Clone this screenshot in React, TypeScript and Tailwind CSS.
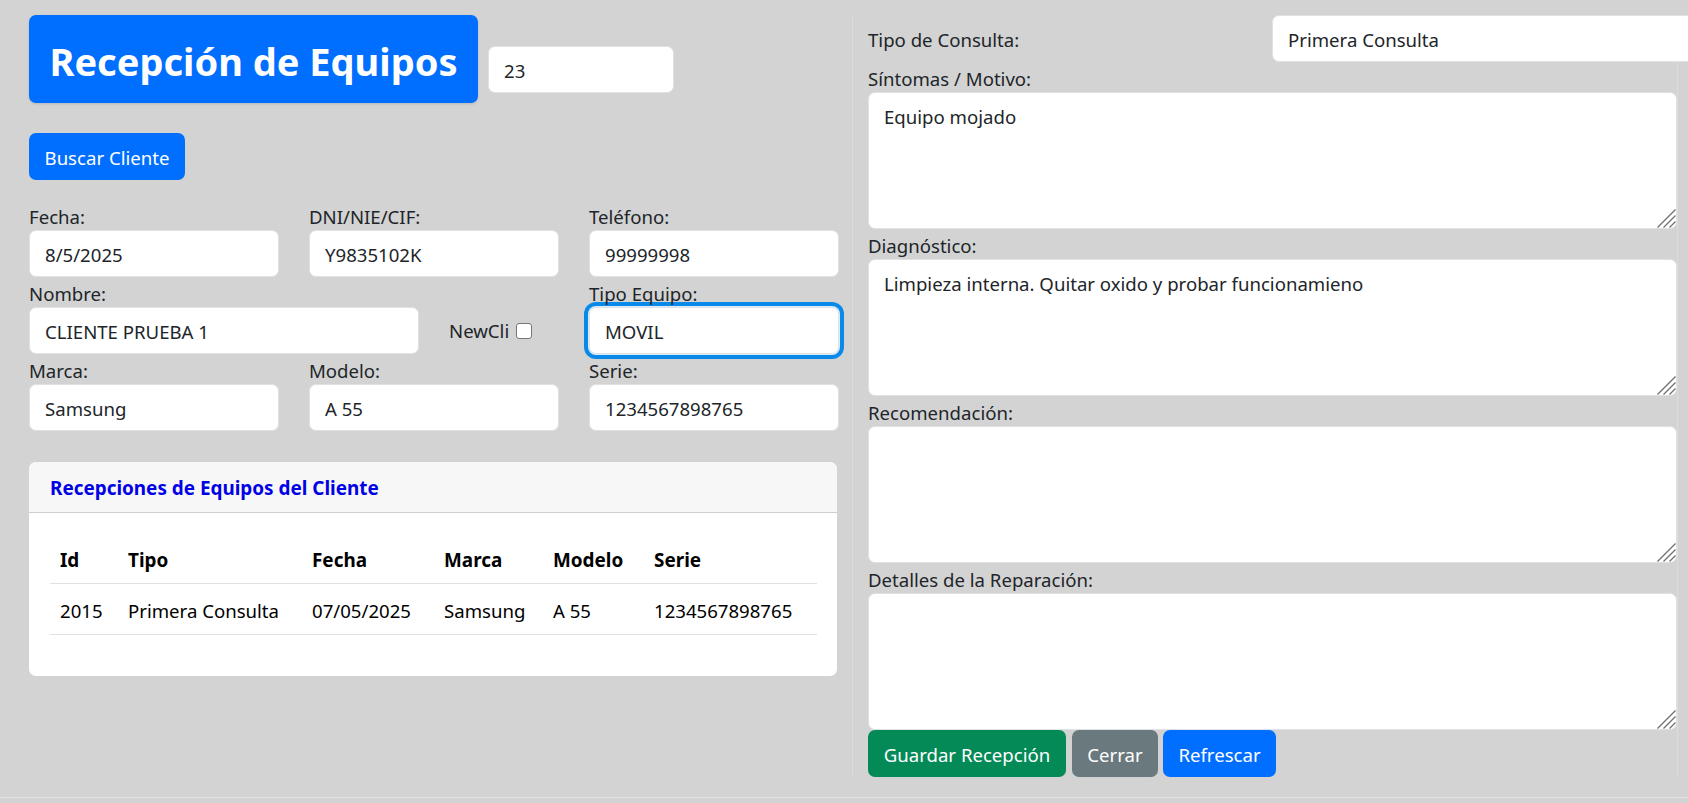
const fieldClass =
  'block w-full h-[47px] rounded-[7px] border border-[#dee2e6] bg-white px-[15px] pt-[2px] text-[18.6px] text-[#212529] outline-none';
const areaClass =
  'block w-full h-[137px] resize-none rounded-[7px] border border-[#dee2e6] bg-white px-[15px] py-[9px] text-[18.6px] leading-[29px] text-[#212529] outline-none';
const labelClass = 'block h-[30px] leading-[34px] text-[18.6px] text-[#212529]';
const btnClass = 'h-[47px] rounded-[7px] pt-[2px] text-[18.6px] text-white';

const columns = [
  { name: 'Id', width: 'w-[68px]' },
  { name: 'Tipo', width: 'w-[184px]' },
  { name: 'Fecha', width: 'w-[132px]' },
  { name: 'Marca', width: 'w-[109px]' },
  { name: 'Modelo', width: 'w-[101px]' },
  { name: 'Serie', width: 'w-[173px]' },
];
const row = ['2015', 'Primera Consulta', '07/05/2025', 'Samsung', 'A 55', '1234567898765'];

function Field({ label, value }: { label: string; value: string }) {
  return (
    <div>
      <label className={labelClass}>{label}</label>
      <input className={fieldClass} defaultValue={value} />
    </div>
  );
}

function Area({ label, value }: { label: string; value?: string }) {
  return (
    <div>
      <label className={labelClass}>{label}</label>
      <div className="relative">
        <textarea className={areaClass} defaultValue={value} />
        {/* resize grip */}
        <svg className="pointer-events-none absolute bottom-[1px] right-[1px] h-[20px] w-[19px]" viewBox="0 0 19 20" fill="none">
          <path d="M0.5 19.5L18.5 1.5M6.5 19.5L18.5 7.5M12.5 19.5L18.5 13.5" stroke="#707070" strokeWidth="1.3" />
        </svg>
      </div>
    </div>
  );
}

export default function App() {
  return (
    <div className="flex h-screen w-full flex-col overflow-hidden bg-[#d3d3d3] font-['Noto_Sans',sans-serif]">
      <div className="flex h-[797px] shrink-0">
        {/* Left: datos del cliente y equipo */}
        <div className="w-[852px] shrink-0 pl-[29px] pt-[15px]">
          <div className="flex items-start gap-[10px]">
            <h1 className="flex h-[88px] w-[449px] items-center justify-center rounded-[7px] bg-[#006fff] pt-[4px] text-[38px] font-bold text-white shadow-sm">
              Recepción de Equipos
            </h1>
            <input className={`${fieldClass} mt-[31px] !w-[186px]`} defaultValue="23" />
          </div>

          <button className={`${btnClass} mt-[30px] w-[156px] bg-[#006fff]`}>Buscar Cliente</button>

          <div className="mt-[20px] grid grid-cols-[249.5px_249.5px_249.5px] gap-x-[30.5px]">
            <Field label="Fecha:" value="8/5/2025" />
            <Field label="DNI/NIE/CIF:" value="Y9835102K" />
            <Field label="Teléfono:" value="99999998" />

            <div className="col-span-2 flex items-end">
              <div className="w-[390px] shrink-0">
                <Field label="Nombre:" value="CLIENTE PRUEBA 1" />
              </div>
              <div className="ml-[30px] flex h-[47px] items-center gap-[7px] text-[18.6px] text-[#212529]">
                NewCli
                <input type="checkbox" className="h-4 w-4 appearance-none rounded-[3px] border border-[#767676] bg-white" />
              </div>
            </div>
            <div>
              <label className={labelClass}>Tipo Equipo:</label>
              <input
                className={`${fieldClass} border-[#9fc9f5] shadow-[0_0_0_1px_#d8ecfb,0_0_0_5px_#0a8ae8]`}
                defaultValue="MOVIL"
              />
            </div>

            <Field label="Marca:" value="Samsung" />
            <Field label="Modelo:" value="A 55" />
            <Field label="Serie:" value="1234567898765" />
          </div>

          <div className="mt-[31px] h-[214px] w-[808px] overflow-hidden rounded-[7px] bg-white">
            <div className="flex h-[51px] items-center border-b border-[#cfcfcf] bg-[#f7f7f7] px-[21px] pt-[2px] text-[18.9px] font-bold text-[#0000e6]">
              Recepciones de Equipos del Cliente
            </div>
            <div className="pl-[21px] pt-[23px]">
              <table className="w-[767px] table-fixed border-collapse text-[18.6px] text-black">
                <thead>
                  <tr className="h-[47px] border-b border-[#dee2e6]">
                    {columns.map(c => (
                      <th key={c.name} className={`${c.width} px-[10px] pt-px text-left text-[18.9px] font-bold`}>
                        {c.name}
                      </th>
                    ))}
                  </tr>
                </thead>
                <tbody>
                  <tr className="h-[51px] border-b border-[#dee2e6]">
                    {row.map(cell => (
                      <td key={cell} className="px-[10px] pt-[4px] whitespace-nowrap">
                        {cell}
                      </td>
                    ))}
                  </tr>
                </tbody>
              </table>
            </div>
          </div>
        </div>

        {/* Right: detalle de la consulta */}
        <div className="mt-[16px] h-[761px] w-[826px] shrink-0 border-x border-[#dcdcdc] pl-[15px]">
          <div className="-mt-px flex h-[47px] items-center">
            <label className="w-[404px] shrink-0 pt-[2px] text-[18.6px] text-[#212529]">Tipo de Consulta:</label>
            <input className={`${fieldClass} !w-[500px] shrink-0`} defaultValue="Primera Consulta" />
          </div>
          <Area label="Síntomas / Motivo:" value="Equipo mojado" />
          <Area label="Diagnóstico:" value="Limpieza interna. Quitar oxido y probar funcionamieno" />
          <Area label="Recomendación:" />
          <Area label="Detalles de la Reparación:" />
          <div className="flex">
            <button className={`${btnClass} w-[198px] bg-[#048a57]`}>Guardar Recepción</button>
            <button className={`${btnClass} ml-[6px] w-[86px] bg-[#6a797d]`}>Cerrar</button>
            <button className={`${btnClass} ml-[5px] w-[113px] bg-[#006fff]`}>Refrescar</button>
          </div>
        </div>
      </div>
      <div className="h-px shrink-0 bg-[#e2e2e2]" />
    </div>
  );
}
